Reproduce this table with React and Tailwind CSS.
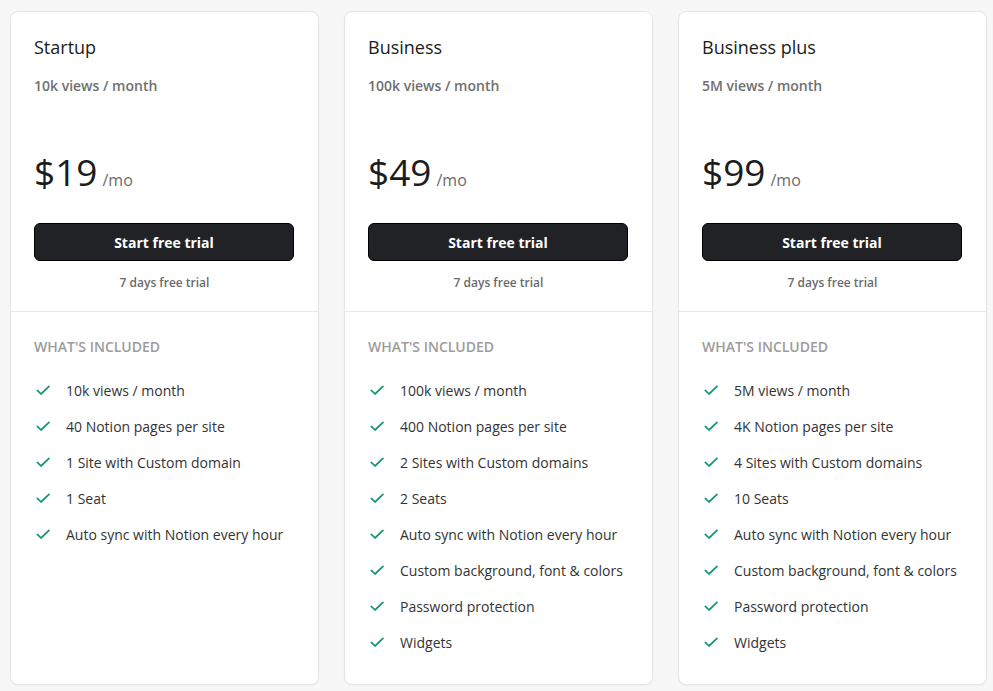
const plans = [
  {
    name: 'Startup',
    views: '10k views / month',
    price: '$19',
    features: [
      '10k views / month',
      '40 Notion pages per site',
      '1 Site with Custom domain',
      '1 Seat',
      'Auto sync with Notion every hour',
    ],
  },
  {
    name: 'Business',
    views: '100k views / month',
    price: '$49',
    features: [
      '100k views / month',
      '400 Notion pages per site',
      '2 Sites with Custom domains',
      '2 Seats',
      'Auto sync with Notion every hour',
      'Custom background, font & colors',
      'Password protection',
      'Widgets',
    ],
  },
  {
    name: 'Business plus',
    views: '5M views / month',
    price: '$99',
    features: [
      '5M views / month',
      '4K Notion pages per site',
      '4 Sites with Custom domains',
      '10 Seats',
      'Auto sync with Notion every hour',
      'Custom background, font & colors',
      'Password protection',
      'Widgets',
    ],
  },
];

function CheckIcon() {
  return (
    <svg width="16" height="16" viewBox="0 0 24 24" fill="none" stroke="currentColor" strokeWidth="2.6" strokeLinecap="round" strokeLinejoin="round" className="text-[#119b6d] shrink-0">
      <path d="M3.5 12.5l5.5 5.5L21 6.5" />
    </svg>
  );
}

function PlanCard({ plan }) {
  return (
    <div className="w-[309px] h-[674px] bg-white border border-[#e5e5e5] rounded-lg shadow-[0_1px_2px_rgba(0,0,0,0.04)] flex flex-col">
      <div className="px-[23px] pt-[22px] pb-[20px] border-b border-[#e8e8e8]">
        <h3 className="text-[18px] leading-[26px] text-[#1a1c20]">{plan.name}</h3>
        <p className="mt-[16px] text-[14px] leading-5 font-semibold text-[#6f6f6f]">{plan.views}</p>
        <div className="mt-[54px] flex items-baseline gap-[5px]">
          <span className="text-[37px] leading-[44px] text-[#1a1c20]">{plan.price}</span>
          <span className="text-[16px] text-[#6b6b6b]">/mo</span>
        </div>
        <button className="mt-[29px] w-[260px] h-[38px] rounded-md bg-[#212226] border border-black text-white text-[14px] font-bold">
          Start free trial
        </button>
        <p className="mt-[14px] text-center text-[12px] leading-4 font-semibold text-[#6b6b6b]">7 days free trial</p>
      </div>
      <div className="px-[23px] pt-[25px]">
        <h4 className="text-[14px] leading-5 font-semibold uppercase text-[#9c9c9c]">What's included</h4>
        <ul className="mt-[15px] flex flex-col">
          {plan.features.map((f) => (
            <li key={f} className="h-[36px] flex items-center gap-[15px] pl-[1px]">
              <CheckIcon />
              <span className="text-[14px] text-[#333]">{f}</span>
            </li>
          ))}
        </ul>
      </div>
    </div>
  );
}

export default function App() {
  return (
    <div className="min-h-screen w-full bg-[#f7f7f7] pt-[11px] pl-[10px] flex gap-[25px] font-['Open_Sans',sans-serif]">
      {plans.map((p) => (
        <PlanCard key={p.name} plan={p} />
      ))}
    </div>
  );
}
